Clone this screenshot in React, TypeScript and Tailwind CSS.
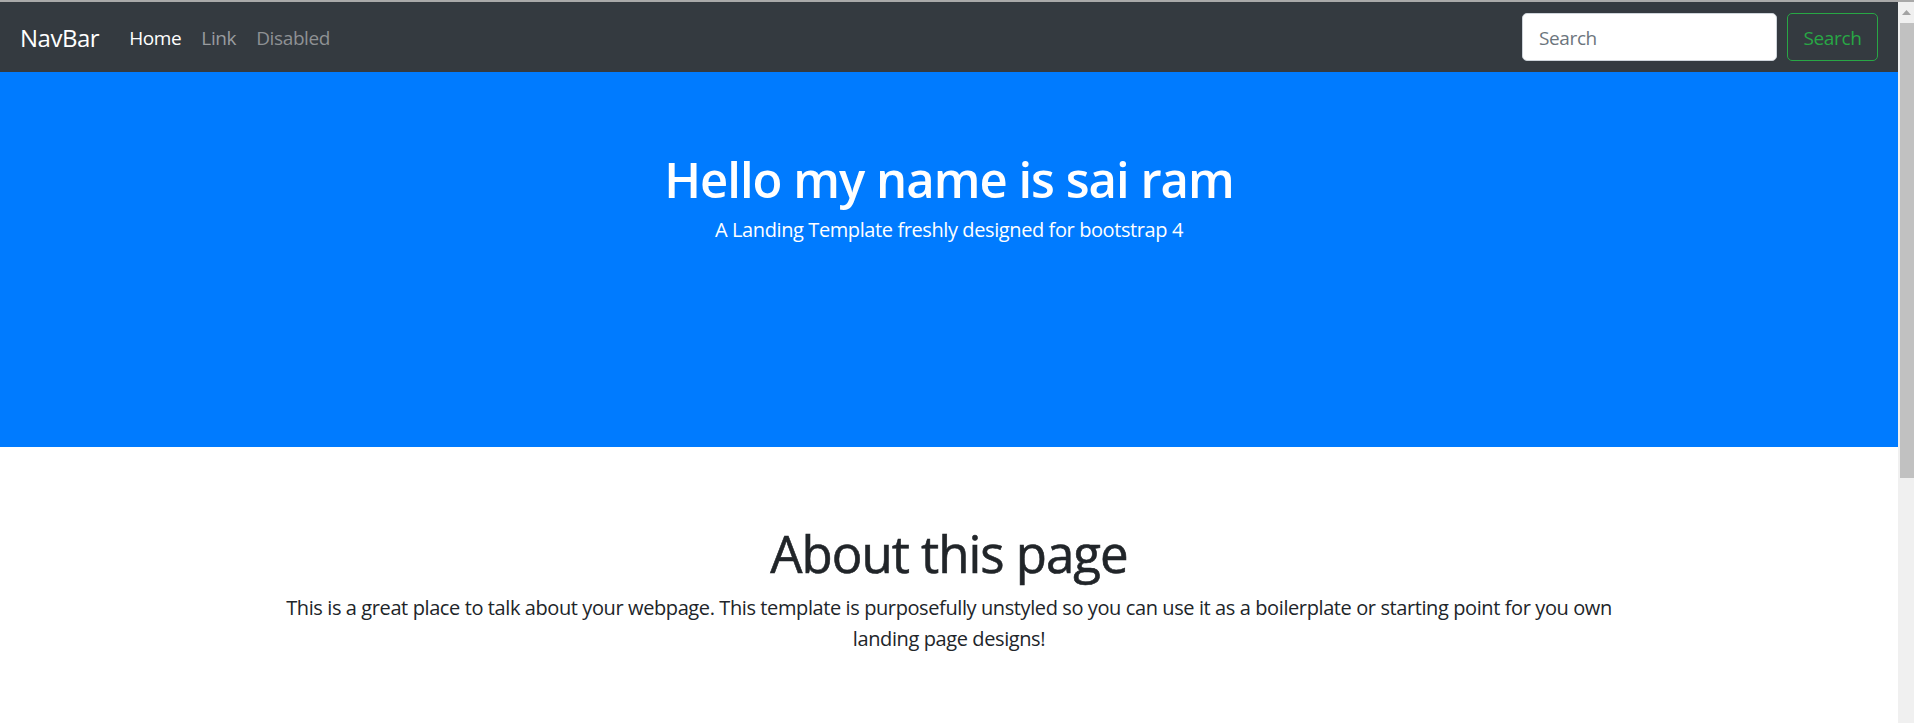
import React from "react";

const font = { fontFamily: '"Open Sans", "Noto Sans", sans-serif' };

const App = () => {
    return (
        <div className="h-[723px] w-full overflow-hidden flex flex-col bg-white" style={font}>
            {/* window edge */}
            <div className="h-[2px] bg-[#a9a9a9] shrink-0" />

            <div className="flex flex-1 min-h-0">
                {/* page */}
                <div className="flex-1 flex flex-col min-w-0">
                    {/* navbar */}
                    <nav className="h-[70px] bg-[#343a40] flex items-center pl-[20px] pr-[20px] shrink-0">
                        <span className="text-[24px] text-white mr-[20px] tracking-[-0.02em] pt-[2px]">NavBar</span>
                        <ul className="flex items-center text-[19px] tracking-[-0.02em] pt-[2px]">
                            <li className="px-[10px] text-white">Home</li>
                            <li className="px-[10px] text-[#999c9f]">Link</li>
                            <li className="px-[10px] text-[#8e9194]">Disabled</li>
                        </ul>
                        <form className="ml-auto flex items-center gap-[10px]">
                            <input
                                type="text"
                                placeholder="Search"
                                className="w-[255px] h-[48px] rounded-[5px] bg-white border border-[#ced4da] px-[16px] pt-[2px] text-[19px] text-[#495057] placeholder:text-[#6c757d] outline-none tracking-[-0.02em]"
                            />
                            <button
                                type="button"
                                className="w-[91px] h-[48px] rounded-[5px] border border-[#28a745] text-[#28a745] text-[19px] pt-[2px] tracking-[-0.02em]"
                            >
                                Search
                            </button>
                        </form>
                    </nav>

                    {/* hero */}
                    <section className="h-[375px] bg-[#007bff] text-white text-center pt-[77px] shrink-0">
                        <h1 className="text-[49px] font-semibold leading-[60px] tracking-[-0.02em]">Hello my name is sai ram</h1>
                        <p className="text-[20px] leading-[30px] mt-[6px] tracking-[-0.02em]">
                            A Landing Template freshly designed for bootstrap 4
                        </p>
                    </section>

                    {/* about */}
                    <section className="flex-1 text-center text-[#212529] pt-[75px]">
                        <h2 className="text-[51px] font-medium leading-[62px] tracking-[-0.02em] [-webkit-text-stroke:0.6px_#212529]">About this page</h2>
                        <p className="max-w-[1360px] mx-auto text-[20px] leading-[31px] mt-[8px] tracking-[-0.02em]">
                            This is a great place to talk about your webpage. This template is purposefully unstyled so you can use it as a boilerplate or starting point for you own landing page designs!
                        </p>
                    </section>
                </div>

                {/* scrollbar */}
                <div className="w-[16px] bg-[#f0f0f0] flex flex-col shrink-0">
                    <div className="h-[21px] flex items-center justify-center">
                        <svg width="9" height="5" viewBox="0 0 9 5">
                            <path d="M0 5 L4.5 0 L9 5 Z" fill="#a3a3a3" />
                        </svg>
                    </div>
                    <div className="h-[455px] ml-[2px] bg-[#c1c1c1]" />
                </div>
            </div>
        </div>
    );
};

export default App;
